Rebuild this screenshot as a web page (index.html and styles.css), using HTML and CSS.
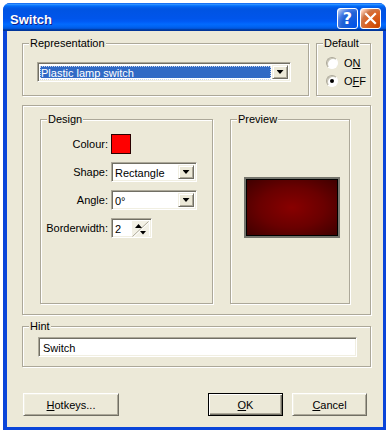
FILE: index.html
```html
<!DOCTYPE html>
<html>
<head>
<meta charset="utf-8">
<title>Switch</title>
<link rel="stylesheet" href="styles.css">
</head>
<body>
<div class="window">
  <div class="titlebar">
    <span class="title">Switch</span>
    <span class="tbtn help">?</span>
    <span class="tbtn close"><svg width="19" height="19" viewBox="0 0 19 19"><path d="M5 5 L14 14 M14 5 L5 14" stroke="#fff" stroke-width="2.2" stroke-linecap="square" fill="none"/></svg></span>
  </div>
  <div class="client">
    <div class="toprow">
      <fieldset class="group rep">
        <legend>Representation</legend>
        <div class="combo wide">
          <span class="val selected"><span class="focus">Plastic lamp switch</span></span>
          <span class="arrow"><i></i></span>
        </div>
      </fieldset>
      <fieldset class="group def">
        <legend>Default</legend>
        <div class="radio first"><span class="dot"></span><span>O<u>N</u></span></div>
        <div class="radio"><span class="dot checked"></span><span>O<u>F</u>F</span></div>
      </fieldset>
    </div>
    <fieldset class="group big">
      <fieldset class="group design">
        <legend>Design</legend>
        <div class="form">
          <span class="lbl">Colour:</span><span class="swatch"></span>
          <span class="lbl">Shape:</span>
          <div class="combo small"><span class="val">Rectangle</span><span class="arrow"><i></i></span></div>
          <span class="lbl">Angle:</span>
          <div class="combo small"><span class="val">0°</span><span class="arrow"><i></i></span></div>
          <span class="lbl">Borderwidth:</span>
          <div class="spin"><span class="val">2</span><svg class="spinbtn" width="17" height="16" viewBox="0 0 17 16"><path d="M0.5 15.5 L16.5 0.5" stroke="#aca899" stroke-width="1"/><path d="M1.5 16 L17 1.5" stroke="#fff" stroke-width="1"/><path d="M3 7 L6.5 3 L10 7 Z" fill="#000"/><path d="M8 10 L14 10 L11 13.5 Z" fill="#000"/></svg></div>
        </div>
      </fieldset>
      <fieldset class="group preview">
        <legend>Preview</legend>
        <div class="lamp"></div>
      </fieldset>
    </fieldset>
    <fieldset class="group hint">
      <legend>Hint</legend>
      <div class="textbox">Switch</div>
    </fieldset>
    <div class="buttons">
      <span class="btn hotkeys"><u>H</u>otkeys...</span>
      <span class="spacer"></span>
      <span class="btn default"><u>O</u>K</span>
      <span class="btn"><u>C</u>ancel</span>
    </div>
  </div>
</div>
</body>
</html>
```
FILE: styles.css
```css
* { box-sizing: border-box; }
html, body { margin: 0; padding: 0; background: #fff; }
body {
  font-family: "Liberation Sans", Arial, sans-serif;
  font-size: 11px;
  color: #000;
}
u { text-decoration: underline; text-underline-offset: 1px; }

.window {
  margin: 3px 0 0 3px;
  width: 383px;
  height: 427px;
  display: flex;
  flex-direction: column;
  background: #0a45d9;
  border-radius: 7px 7px 0 0;
  overflow: hidden;
}
.titlebar {
  height: 28px;
  flex: none;
  display: flex;
  align-items: center;
  padding: 3px 5px 0 7px;
  background: linear-gradient(to bottom, #0058ee 0%, #3593ff 4%, #288eff 6%, #127dff 8%, #036ffc 10%, #0262ee 14%, #0057e5 20%, #0054e3 24%, #0055eb 56%, #005bf5 66%, #026afe 76%, #0062ef 86%, #0052d6 92%, #0040ab 94%, #003092 100%);
}
.title {
  flex: 1;
  color: #fff;
  font-weight: bold;
  font-size: 13px;
  padding-top: 2px;
  text-shadow: 1px 1px #0f1f89;
}
.tbtn {
  width: 21px;
  height: 21px;
  margin-left: 2px;
  border: 1px solid #fff;
  border-radius: 3px;
  display: flex;
  align-items: center;
  justify-content: center;
}
.help {
  background: radial-gradient(circle at 90% 90%, #0054e9 0%, #2263d5 55%, #4479e4 70%, #a3bbec 90%, #fff 100%);
  color: #fff;
  font-weight: bold;
  font-size: 16px;
  font-family: "DejaVu Sans", sans-serif;
}
.close {
  background: radial-gradient(circle at 90% 90%, #cc4600 0%, #dc6527 55%, #cd7546 70%, #ffccb2 90%, #fff 100%);
}

.client {
  flex: 1;
  margin: 0 3px 3px 4px;
  background: #ece9d8;
  padding: 6px 12px 0 15px;
  display: flex;
  flex-direction: column;
}

.group {
  margin: 0;
  padding: 0;
  min-width: 0;
  border: 1px solid #aca899;
  box-shadow: inset 1px 1px #fff, 1px 1px #fff;
}
.group legend {
  margin-left: 6px;
  padding: 0 1px;
  line-height: 13px;
  background: #ece9d8;
}

.toprow { display: flex; gap: 7px; }
.rep { width: 287px; height: 59px; }
.rep .combo { margin: 12px 0 0 14px; }
.def { width: 55px; height: 59px; }
.def .radio { margin-left: 9px; }
.def .radio.first { margin-top: 4px; }

.radio { display: flex; align-items: center; height: 18px; }
.dot {
  width: 12px; height: 12px;
  border-radius: 50%;
  background: #fff;
  border: 1px solid;
  border-color: #aca899 #fff #fff #aca899;
  box-shadow: inset 1px 1px #c8c5b6;
  margin-right: 6px;
  display: flex; align-items: center; justify-content: center;
}
.dot.checked::after {
  content: "";
  width: 4px; height: 4px;
  border-radius: 50%;
  background: #000;
}

.combo {
  display: flex;
  height: 20px;
  padding: 2px;
  background: #fff;
  border: 1px solid;
  border-color: #aca899 #fff #fff #aca899;
  box-shadow: inset 1px 1px #716f64, inset -1px -1px #f1efe2;
}
.combo.wide { width: 254px; }
.combo.small { width: 86px; }
.combo .val { flex: 1; padding-left: 1px; line-height: 16px; }
.combo .val.selected {
  margin: 1px 1px 1px 0;
  background: #316ac5;
  color: #fff;
  line-height: 14px;
  padding: 0;
}
.focus { display: block; height: 14px; padding-left: 1px; outline: 1px dotted #c7d4ec; outline-offset: -1px; }
.arrow {
  flex: none;
  width: 16px;
  background: #ece9d8;
  border: 1px solid;
  border-color: #f1efe2 #716f64 #716f64 #f1efe2;
  box-shadow: inset 1px 1px #fff, inset -1px -1px #aca899;
  display: flex; align-items: center; justify-content: center;
}
.arrow i {
  display: block;
  width: 7px; height: 4px;
  background: #000;
  clip-path: polygon(0 0, 100% 0, 50% 100%);
}

.big {
  margin-top: 9px;
  height: 210px;
  padding: 7px 20px 0 17px;
  display: flex;
  gap: 17px;
  align-items: flex-start;
}
.design { width: 173px; height: 191px; }
.preview { width: 120px; height: 191px; }
.form {
  display: grid;
  grid-template-columns: 67px auto;
  column-gap: 3px;
  row-gap: 8px;
  padding-top: 8px;
  align-items: center;
  justify-items: start;
}
.lbl { justify-self: end; line-height: 20px; }
.swatch { width: 20px; height: 20px; background: #f00; border: 1px solid #2a0000; }
.spin {
  display: flex;
  width: 41px; height: 20px;
  padding: 2px;
  background: #fff;
  border: 1px solid;
  border-color: #aca899 #fff #fff #aca899;
  box-shadow: inset 1px 1px #716f64, inset -1px -1px #f1efe2;
}
.spin .val { flex: 1; padding-left: 1px; line-height: 16px; }
.spinbtn { flex: none; background: #f3f1e6; }

.lamp {
  margin: 51px 0 0 13px;
  width: 96px; height: 61px;
  border: 2px solid #74746c;
  box-shadow: inset 0 0 0 1px #000;
  background: radial-gradient(ellipse at center, #880000 0%, #6a0000 50%, #3c0000 100%);
}

.hint { margin-top: 5px; height: 47px; }
.textbox {
  margin: 4px 0 0 15px;
  width: 319px; height: 20px;
  padding: 2px 0 0 4px;
  line-height: 16px;
  background: #fff;
  border: 1px solid;
  border-color: #aca899 #fff #fff #aca899;
  box-shadow: inset 1px 1px #716f64, inset -1px -1px #f1efe2;
}

.buttons { display: flex; gap: 9px; margin-top: 26px; padding: 0 4px 0 1px; }
.spacer { flex: 1; }
.btn {
  width: 75px; height: 23px;
  display: flex; align-items: center; justify-content: center;
  background: #ece9d8;
  border: 1px solid;
  border-color: #fff #716f64 #716f64 #fff;
  box-shadow: inset 1px 1px #f1efe2, inset -1px -1px #aca899;
}
.btn.hotkeys { width: 96px; }
.btn.default {
  border-color: #000;
  box-shadow: inset 1px 1px #fff, inset -1px -1px #716f64, inset -2px -2px #aca899;
}
```
